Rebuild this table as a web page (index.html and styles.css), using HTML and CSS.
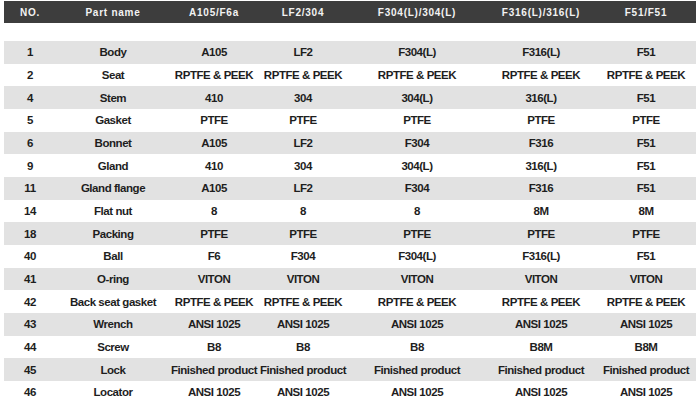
FILE: index.html
```html
<!DOCTYPE html>
<html>
<head>
<meta charset="utf-8">
<link rel="stylesheet" href="styles.css">
</head>
<body>
<table class="parts">
  <colgroup>
    <col class="c1"><col class="c2"><col class="c3"><col class="c4"><col class="c5"><col class="c6"><col class="c7">
  </colgroup>
  <thead>
    <tr class="head"><th>NO.</th><th>Part name</th><th>A105/F6a</th><th>LF2/304</th><th>F304(L)/304(L)</th><th>F316(L)/316(L)</th><th>F51/F51</th></tr>
    <tr class="spacer"><td colspan="7"></td></tr>
  </thead>
  <tbody>
    <tr><td>1</td><td>Body</td><td>A105</td><td>LF2</td><td>F304(L)</td><td>F316(L)</td><td>F51</td></tr>
    <tr><td>2</td><td>Seat</td><td>RPTFE &amp; PEEK</td><td>RPTFE &amp; PEEK</td><td>RPTFE &amp; PEEK</td><td>RPTFE &amp; PEEK</td><td>RPTFE &amp; PEEK</td></tr>
    <tr><td>4</td><td>Stem</td><td>410</td><td>304</td><td>304(L)</td><td>316(L)</td><td>F51</td></tr>
    <tr><td>5</td><td>Gasket</td><td>PTFE</td><td>PTFE</td><td>PTFE</td><td>PTFE</td><td>PTFE</td></tr>
    <tr><td>6</td><td>Bonnet</td><td>A105</td><td>LF2</td><td>F304</td><td>F316</td><td>F51</td></tr>
    <tr><td>9</td><td>Gland</td><td>410</td><td>304</td><td>304(L)</td><td>316(L)</td><td>F51</td></tr>
    <tr><td>11</td><td>Gland flange</td><td>A105</td><td>LF2</td><td>F304</td><td>F316</td><td>F51</td></tr>
    <tr><td>14</td><td>Flat nut</td><td>8</td><td>8</td><td>8</td><td>8M</td><td>8M</td></tr>
    <tr><td>18</td><td>Packing</td><td>PTFE</td><td>PTFE</td><td>PTFE</td><td>PTFE</td><td>PTFE</td></tr>
    <tr><td>40</td><td>Ball</td><td>F6</td><td>F304</td><td>F304(L)</td><td>F316(L)</td><td>F51</td></tr>
    <tr><td>41</td><td>O-ring</td><td>VITON</td><td>VITON</td><td>VITON</td><td>VITON</td><td>VITON</td></tr>
    <tr><td>42</td><td>Back seat gasket</td><td>RPTFE &amp; PEEK</td><td>RPTFE &amp; PEEK</td><td>RPTFE &amp; PEEK</td><td>RPTFE &amp; PEEK</td><td>RPTFE &amp; PEEK</td></tr>
    <tr><td>43</td><td>Wrench</td><td>ANSI 1025</td><td>ANSI 1025</td><td>ANSI 1025</td><td>ANSI 1025</td><td>ANSI 1025</td></tr>
    <tr><td>44</td><td>Screw</td><td>B8</td><td>B8</td><td>B8</td><td>B8M</td><td>B8M</td></tr>
    <tr><td>45</td><td>Lock</td><td>Finished product</td><td>Finished product</td><td>Finished product</td><td>Finished product</td><td>Finished product</td></tr>
    <tr><td>46</td><td>Locator</td><td>ANSI 1025</td><td>ANSI 1025</td><td>ANSI 1025</td><td>ANSI 1025</td><td>ANSI 1025</td></tr>
  </tbody>
</table>
</body>
</html>
```
FILE: styles.css
```css
html, body {
  margin: 0;
  padding: 0;
  background: #ffffff;
}
body {
  padding: 1px 0 0 4px;
  font-family: "Liberation Sans", Arial, sans-serif;
}
.parts {
  border-collapse: collapse;
  table-layout: fixed;
  width: 692px;
}
.c1 { width: 52px; }
.c2 { width: 114px; }
.c3 { width: 88px; }
.c4 { width: 90px; }
.c5 { width: 138px; }
.c6 { width: 110px; }
.c7 { width: 100px; }
.parts th, .parts td {
  padding: 0;
  text-align: center;
  white-space: nowrap;
  overflow: visible;
}
.head th {
  height: 22px;
  background: #3d3d3d;
  color: #f2f2f2;
  font-size: 10px;
  font-weight: bold;
  letter-spacing: 0.75px;
}
.spacer td {
  height: 18px;
}
.parts tbody td {
  height: 22.67px;
  font-size: 11.5px;
  font-weight: bold;
  color: #1e1e1e;
  letter-spacing: -0.45px;
}
.parts tbody tr:nth-child(odd) td {
  background: #e2e2e2;
}
```
